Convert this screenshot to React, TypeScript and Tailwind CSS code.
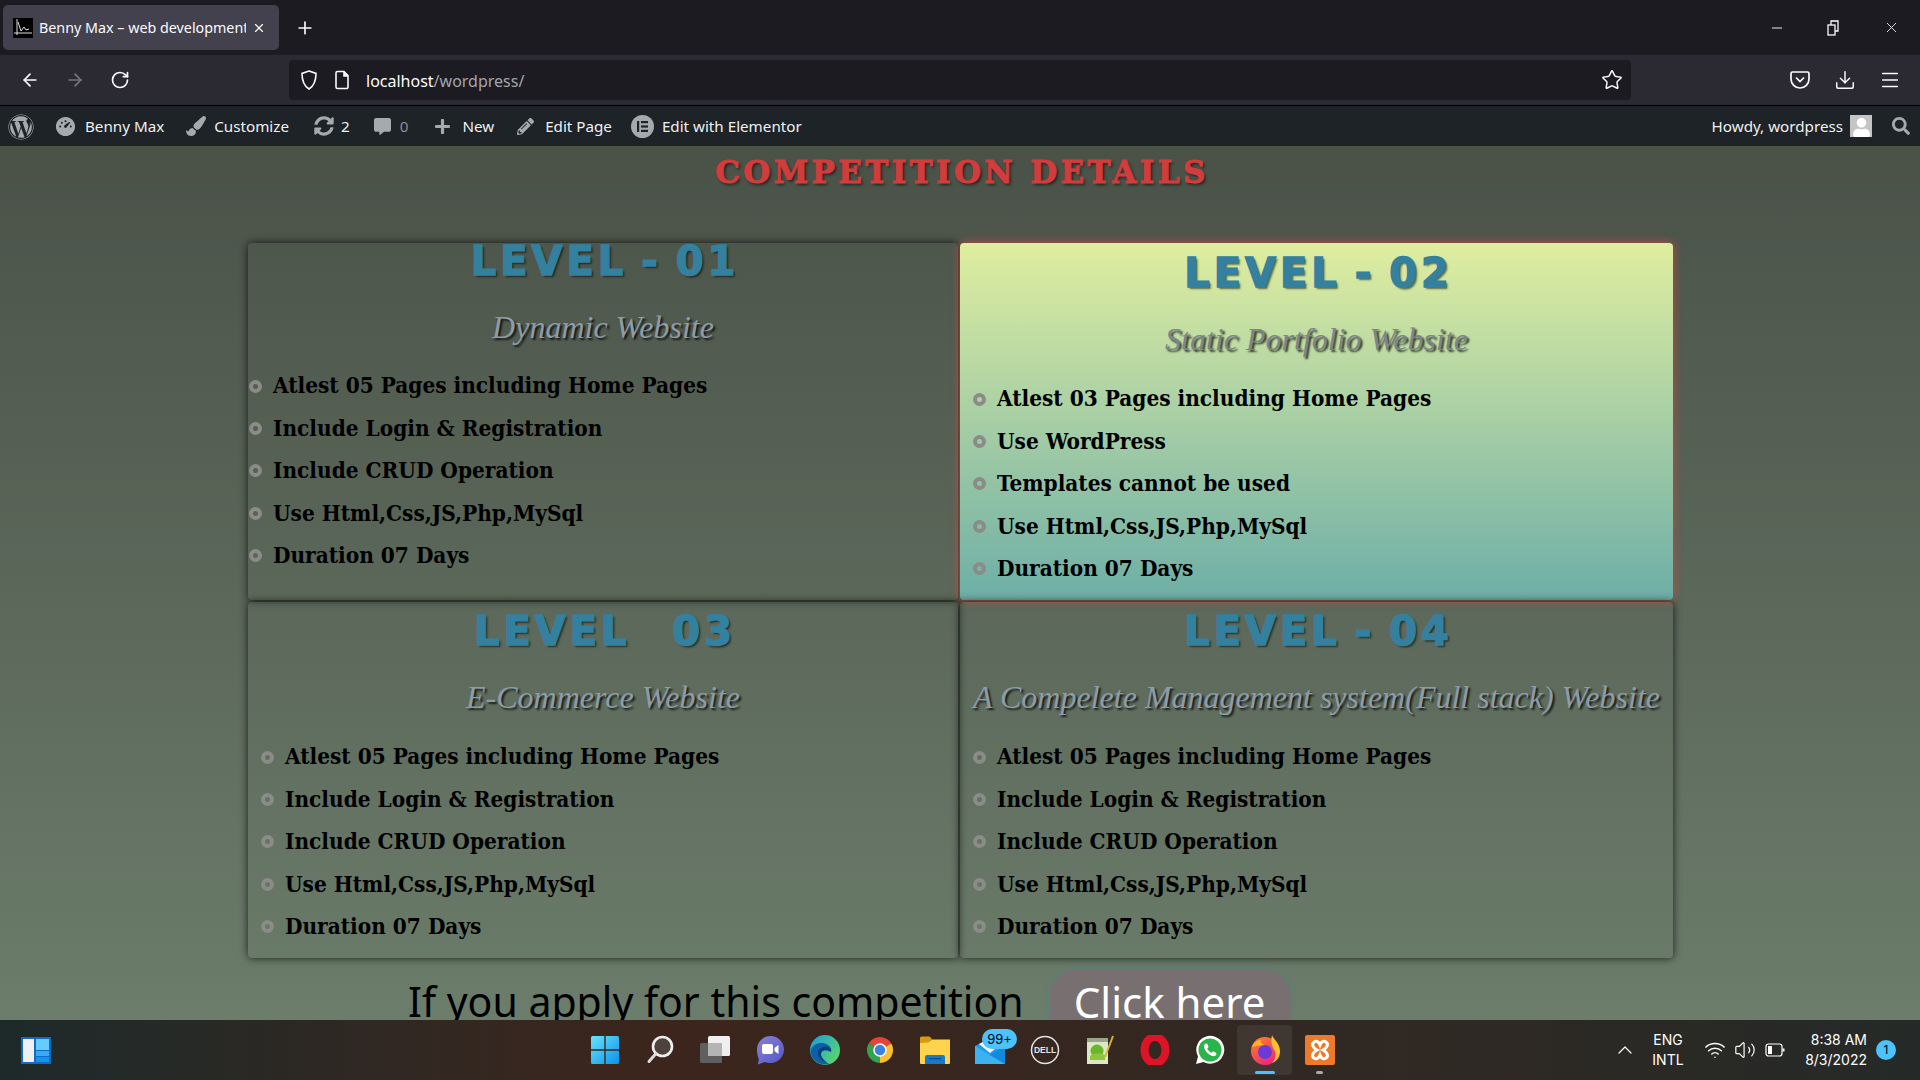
import { ArrowLeft, ArrowRight, ChevronUp, Download, Menu, Minus, Plus, RotateCw, Star, Volume2, Wifi, X } from 'lucide-react';
import { FaCommentAlt, FaPaintBrush, FaPencilAlt, FaPlus, FaSearch, FaSyncAlt, FaUser, FaWordpress } from 'react-icons/fa';
import { RiDashboard3Fill } from 'react-icons/ri';

const cards = [
  { level: 'LEVEL - 01', title: 'Dynamic Website', items: ['Atlest 05 Pages including Home Pages', 'Include Login & Registration', 'Include CRUD Operation', 'Use Html,Css,JS,Php,MySql', 'Duration 07 Days'], box: 'pt-0 shadow-[0_0_8px_rgba(0,0,0,0.75)]', list: 'pl-[2px] mt-[13px]', text: 'text-[#8d9ca8]' },
  { level: 'LEVEL - 02', title: 'Static Portfolio Website', items: ['Atlest 03 Pages including Home Pages', 'Use WordPress', 'Templates cannot be used', 'Use Html,Css,JS,Php,MySql', 'Duration 07 Days'], box: 'pt-[12px] bg-gradient-to-b from-[#dfee9f] to-[#6daea6] shadow-[0_0_10px_rgba(225,70,60,0.8)]', list: 'pl-[14px] mt-[14px]', text: 'text-[#7c8688]' },
  { level: 'LEVEL   03', title: 'E-Commerce Website', items: ['Atlest 05 Pages including Home Pages', 'Include Login & Registration', 'Include CRUD Operation', 'Use Html,Css,JS,Php,MySql', 'Duration 07 Days'], box: 'pt-[11px] shadow-[0_0_8px_rgba(0,0,0,0.75)]', list: 'pl-[14px] mt-[14px]', text: 'text-[#8d9ca8]' },
  { level: 'LEVEL - 04', title: 'A Compelete Management system(Full stack) Website', items: ['Atlest 05 Pages including Home Pages', 'Include Login & Registration', 'Include CRUD Operation', 'Use Html,Css,JS,Php,MySql', 'Duration 07 Days'], box: 'pt-[11px] shadow-[0_0_8px_rgba(0,0,0,0.75)]', list: 'pl-[14px] mt-[14px]', text: 'text-[#8d9ca8]' },
];

const Favicon = () => (
  <svg width="20" height="20" viewBox="0 0 20 20" className="shrink-0">
    <rect width="20" height="20" fill="#000" />
    <path d="M4 1v16M1 15h18M5 4l3 9 3-4 2 3 3-1" stroke="#ddd" strokeWidth="1" fill="none" />
  </svg>
);

const ShieldIcon = () => (
  <svg width="20" height="22" viewBox="0 0 20 22" fill="none" stroke="#fbfbfe" strokeWidth="1.6">
    <path d="M10 2l7 2.4c0 7-1.500 12-7 15.600-5.500-3.600-7-8.600-7-15.600z" />
  </svg>
);

const PageIcon = () => (
  <svg width="16" height="20" viewBox="0 0 16 20" fill="none" stroke="#fbfbfe" strokeWidth="1.6">
    <path d="M2 3a1.500 1.500 0 0 1 1.500-1.500H10l4 4V17a1.500 1.500 0 0 1-1.500 1.500h-9A1.500 1.500 0 0 1 2 17z" />
    <path d="M10 1.500V6h4" fill="#fbfbfe" />
  </svg>
);

const PocketIcon = () => (
  <svg width="22" height="22" viewBox="0 0 22 22" fill="none" stroke="#fbfbfe" strokeWidth="1.7">
    <path d="M3.500 3h15A1.500 1.500 0 0 1 20 4.500V10a9 9 0 0 1-18 0V4.500A1.500 1.500 0 0 1 3.500 3z" />
    <path d="M7 8.500l4 4 4-4" />
  </svg>
);

const RestoreIcon = () => (
  <svg width="14" height="16" viewBox="0 0 14 16" fill="none" stroke="#fbfbfe" strokeWidth="1.300">
    <rect x="1" y="5" width="7" height="10" />
    <path d="M4 5V1h7v10H8" />
  </svg>
);

const ElementorIcon = () => (
  <span className="w-[23px] h-[23px] rounded-full bg-[#a7aaad] flex items-center justify-center shrink-0">
    <svg width="11" height="11" viewBox="0 0 11 11" fill="#1d2327">
      <rect x="0" y="0" width="2.200" height="11" />
      <rect x="4" y="0" width="7" height="2.200" />
      <rect x="4" y="4.400" width="7" height="2.200" />
      <rect x="4" y="8.800" width="7" height="2.200" />
    </svg>
  </span>
);

const taskIcons = [
  <svg key="start" width="30" height="30" viewBox="0 0 30 30">
    <defs>
      <linearGradient id="startG" x1="0" y1="0" x2="1" y2="1">
        <stop offset="0" stopColor="#66e4fb" />
        <stop offset="1" stopColor="#0b92ec" />
      </linearGradient>
    </defs>
    <path d="M1 2.500A1.500 1.500 0 0 1 2.500 1h11.800v13.300H1zM15.700 1h11.800A1.500 1.500 0 0 1 29 2.500v11.800H15.700zM1 15.700h13.300V29H2.500A1.500 1.500 0 0 1 1 27.500zM15.700 15.700H29v11.800a1.500 1.500 0 0 1-1.500 1.500H15.700z" fill="url(#startG)" />
  </svg>,
  <svg key="search" width="30" height="30" viewBox="0 0 30 30"><circle cx="17.500" cy="11.500" r="9.500" fill="#4d423d" stroke="#eee" strokeWidth="2.600" /><path d="M11 18.500l-7 8" stroke="#ddd" strokeWidth="3" strokeLinecap="round" /></svg>,
  <svg key="tasks" width="30" height="30" viewBox="0 0 30 30"><rect x="8" y="1" width="22" height="20" rx="1.500" fill="#efefef" /><rect x="0" y="8" width="22" height="20" rx="1.500" fill="#5f5f5f" /><rect x="8" y="8" width="14" height="13" fill="#b4b4b4" /></svg>,
  <svg key="chat" width="30" height="30" viewBox="0 0 30 30"><defs><linearGradient id="chatG" x1="0" y1="0" x2="1" y2="1"><stop offset="0" stopColor="#8a80d8" /><stop offset="1" stopColor="#5057c4" /></linearGradient></defs><path d="M15.500 1C23 1 29 7 29 14.500S23 28 15.500 28c-2 0-4-.4-5.500-1l-7 2.500c-.8-.8 1.400-3.500.6-6C2.500 21 2 18 2 14.500 2 7 8 1 15.500 1z" fill="url(#chatG)" /><rect x="7" y="9" width="11" height="10" rx="2" fill="#fff" /><path d="M19.500 13l4-3v9l-4-3z" fill="#fff" /></svg>,
  <svg key="edge" width="30" height="30" viewBox="0 0 30 30"><defs><linearGradient id="edgeG" x1="0" y1="0" x2="1" y2="0.700"><stop offset="0" stopColor="#1a9ae0" /><stop offset="1" stopColor="#5ad66c" /></linearGradient></defs><circle cx="15" cy="15" r="15" fill="url(#edgeG)" /><path d="M0.500 17C2 9 9 7 15 8.500c5 1.500 7 5 6 8.500-3-2.500-8-2.500-9.500 0-2 3.500 1 9 8 12C10 31 2 26 .5 17z" fill="#0d5fa6" /><path d="M21 17c-3-2.500-8-2.500-9.500 0-1.500 3 .5 7 5 10-5-1-9-5-8.500-10 .5-4 6-6 10-5 2.500.7 3.500 2.500 3 5z" fill="#093f7a" /></svg>,
  <svg key="chrome" width="28" height="28" viewBox="0 0 30 30"><path d="M15 15L2.880 8A14 14 0 0 1 27.120 8Z" fill="#e5443a" /><path d="M15 15L27.120 8A14 14 0 0 1 15 29Z" fill="#fbc02d" /><path d="M15 15L15 29A14 14 0 0 1 2.880 8Z" fill="#33a24f" /><circle cx="15" cy="15" r="7.200" fill="#fff" /><circle cx="15" cy="15" r="5.600" fill="#3b82e0" /></svg>,
  <svg key="files" width="30" height="30" viewBox="0 0 30 30"><path d="M0 3a1.500 1.500 0 0 1 1.500-1.500h8l3 3h-1L8 8H0z" fill="#d99a0b" /><path d="M0 8l8-.5 4-3h18V28a1 1 0 0 1-1 1H1a1 1 0 0 1-1-1z" fill="#fdd44b" /><path d="M5 22a2 2 0 0 1 2-2h16a2 2 0 0 1 2 2v7H5z" fill="#1679c9" /><rect x="9" y="23" width="12" height="1.300" fill="#0b4f8a" /></svg>,
  <svg key="mail" width="30" height="30" viewBox="0 0 30 30"><path d="M0 11l15-8 15 8v18H0z" fill="#1f9ae8" /><path d="M4 9L18 2l8 7-11 9z" fill="#eef8ff" /><path d="M0 11l30 18H1a1 1 0 0 1-1-1z" fill="#3db2f3" /><path d="M0 11l15 9 15-9v18z" fill="#1289dd" /></svg>,
  <svg key="dell" width="30" height="30" viewBox="0 0 30 30"><circle cx="15" cy="15" r="13.500" fill="none" stroke="#e4e4e4" strokeWidth="1.500" /><text x="15" y="18" textAnchor="middle" fontSize="8.500" fontWeight="700" fontFamily="'Liberation Sans', sans-serif" fill="#e4e4e4">DELL</text></svg>,
  <svg key="np" width="30" height="30" viewBox="0 0 30 30"><rect x="2" y="3" width="21" height="26" fill="#dbe8c4" /><rect x="2" y="3" width="21" height="4" fill="#98a58a" /><circle cx="12" cy="16" r="6.500" fill="#6bb52e" /><path d="M5 21c4-3 10-3 15-1v5H5z" fill="#8ec63f" /><path d="M20 22L28 1" stroke="#d8b13a" strokeWidth="2" /></svg>,
  <svg key="opera" width="30" height="30" viewBox="0 0 30 30"><ellipse cx="15" cy="15" rx="10.500" ry="13" fill="none" stroke="#dd1327" strokeWidth="8" /></svg>,
  <svg key="wa" width="30" height="30" viewBox="0 0 30 30"><path d="M1 29l2-7.500a14 14 0 1 1 5.500 5.500z" fill="#fff" /><circle cx="15" cy="15" r="11.500" fill="#29b54c" /><path d="M10.500 8.500c-1.500 1-2 3-1 5.300 1.400 3.200 4 5.800 7 7 2.300.8 4 .2 5-1.300l-.5-1.800-3-1.500-1.500 1.500c-2-.8-3.500-2.300-4.300-4.200l1.400-1.500-1.300-3.300z" fill="#fff" /></svg>,
  <svg key="ff" width="30" height="30" viewBox="0 0 30 30"><defs><linearGradient id="ffG" x1="0" y1="0" x2="0.600" y2="1"><stop offset="0" stopColor="#ff8a1f" /><stop offset="1" stopColor="#f0267a" /></linearGradient></defs><circle cx="15" cy="16" r="14" fill="url(#ffG)" /><path d="M22 0c1 4 8 8 8 16 0 6-3 10-8 12 5-5 4-12 1-15-2-4-2-9-1-13z" fill="#ffc12e" /><circle cx="15" cy="17" r="7" fill="#6a3bd6" /><path d="M2 12c2-5 6-7 9-7-1 3 1 4 4 5-5 0-9 1-13 2z" fill="#ffb02e" /></svg>,
  <svg key="xampp" width="30" height="30" viewBox="0 0 30 30"><rect x="0" y="0" width="30" height="30" rx="2" fill="#ed7a2a" /><path d="M9 7c3-2 5 .5 6 3 1-2.500 3-5 6-3 3 2 1 6-3 8 4 2 6 6 3 8-3 2-5-.5-6-3-1 2.500-3 5-6 3-3-2-1-6 3-8-4-2-6-6-3-8z" fill="none" stroke="#fff" strokeWidth="3" /></svg>,
];

const adminItems = [
  { icon: <RiDashboard3Fill size={23} />, label: 'Benny Max', box: 'ml-[20px] gap-[8px]', text: 'text-[#f0f0f1]' },
  { icon: <FaPaintBrush size={20} />, label: 'Customize', box: 'ml-[22px] gap-[8px]', text: 'text-[#f0f0f1]' },
  { icon: <FaSyncAlt size={20} />, label: '2', box: 'ml-[25px] gap-[7px]', text: 'text-[#f0f0f1]' },
  { icon: <FaCommentAlt size={17} />, label: '0', box: 'ml-[24px] gap-[9px]', text: 'text-[#8c8f94]' },
  { icon: <FaPlus size={17} />, label: 'New', box: 'ml-[26px] gap-[11px]', text: 'text-[#f0f0f1]' },
  { icon: <FaPencilAlt size={17} />, label: 'Edit Page', box: 'ml-[23px] gap-[11px]', text: 'text-[#f0f0f1]' },
  { icon: <ElementorIcon />, label: 'Edit with Elementor', box: 'ml-[19px] gap-[8px]', text: 'text-[#f0f0f1]' },
];

function Card({ card }: { card: (typeof cards)[number] }) {
  return (
    <div className={`rounded-[4px] ${card.box}`}>
      <h2 className="h-[36px] pl-[4px] flex items-center justify-center whitespace-pre text-[40px] font-bold tracking-[4px] [word-spacing:-4px] text-[#33809f] [-webkit-text-stroke:1.5px_#33809f] font-['DejaVu_Sans',sans-serif] [text-shadow:2px_2px_2px_rgba(0,0,0,0.55)]">
        {card.level}
      </h2>
      <h3 className={`mt-[23px] h-[50px] flex items-center justify-center italic text-[32px] whitespace-nowrap font-['Liberation_Serif',serif] ${card.text} [text-shadow:2px_2px_2px_rgba(0,0,0,0.75)]`}>
        {card.title}
      </h3>
      <ul className={card.list}>
        {card.items.map((item) => (
          <li key={item} className="h-[42.4px] flex items-center gap-[12px] text-[22.4px] font-bold text-black font-['DejaVu_Serif_Condensed','DejaVu_Serif',serif]">
            <span className="w-[13px] h-[13px] -mx-[1px] rounded-full border-[4px] border-[#8b8b87] shrink-0" />
            {item}
          </li>
        ))}
      </ul>
    </div>
  );
}

export default function App() {
  return (
    <div className="w-[1920px] h-screen overflow-hidden flex flex-col font-['Noto_Sans',sans-serif]">
      {/* browser chrome */}
      <div className="h-[55px] shrink-0 bg-[#1c1b22] flex items-center pl-[3px] text-[#fbfbfe]">
        <div className="w-[276px] h-[45px] rounded-[5px] bg-[#42414d] flex items-center pl-[10px] pr-[12px] gap-[6px]">
          <Favicon />
          <span className="w-[207px] overflow-hidden whitespace-nowrap text-[14.3px]">Benny Max – web development</span>
          <X size={14} className="shrink-0" />
        </div>
        <Plus size={20} className="ml-[16px]" />
        <div className="ml-auto flex items-center gap-[42px] pr-[20px]">
          <Minus size={16} strokeWidth={1.4} />
          <RestoreIcon />
          <X size={17} strokeWidth={1.2} />
        </div>
      </div>
      <div className="h-[50px] shrink-0 bg-[#2b2a33] flex items-center text-[#fbfbfe]">
        <div className="w-[289px] pl-[20px] flex items-center gap-[25px]">
          <ArrowLeft size={20} />
          <ArrowRight size={20} className="text-[#77767f]" />
          <RotateCw size={20} />
        </div>
        <div className="w-[1342px] h-[40px] rounded-[4px] bg-[#1c1b22] flex items-center pl-[10px] pr-[8px]">
          <ShieldIcon />
          <span className="ml-[15px]"><PageIcon /></span>
          <span className="ml-[16px] pt-[2px] text-[16px]">localhost<span className="text-[#a5a4ab]">/wordpress/</span></span>
          <Star size={22} strokeWidth={1.6} className="ml-auto" />
        </div>
        <div className="ml-auto flex items-center gap-[23px] pr-[19px]">
          <PocketIcon />
          <Download size={22} strokeWidth={1.6} />
          <Menu size={22} strokeWidth={1.6} />
        </div>
      </div>
      <div className="h-[41px] shrink-0 bg-[#1d2327] border-t border-black flex items-center pl-[8px] pr-[10px] pt-[1px] text-[15.2px] text-[#a7aaad]">
        <FaWordpress size={26} />
        <div className="flex items-center">
          {adminItems.map((item) => (
            <div key={item.label} className={`flex items-center ${item.box}`}>
              {item.icon}
              <span className={item.text}>{item.label}</span>
            </div>
          ))}
        </div>
        <div className="ml-auto flex items-center gap-[7px] text-[#f0f0f1]">
          <span>Howdy, wordpress</span>
          <span className="w-[22px] h-[22px] bg-[#c4c4c4] flex items-end justify-center overflow-hidden">
            <FaUser size={19} color="#fff" />
          </span>
          <FaSearch size={18} className="ml-[13px] text-[#a7aaad]" />
        </div>
      </div>

      {/* page */}
      <main className="flex-1 min-h-0 overflow-hidden bg-gradient-to-b from-[#4a5248] to-[#6c7d6b]">
        <h1 className="h-[52px] pl-[4px] flex items-center justify-center text-[31px] font-bold tracking-[3.4px] text-[#d13c3c] [-webkit-text-stroke:1px_#d13c3c] font-['DejaVu_Serif',serif] [text-shadow:2px_2px_3px_rgba(0,0,0,0.6)]">
          COMPETITION DETAILS
        </h1>
        <div className="mt-[45px] ml-[248px] w-[1425px] grid grid-cols-[710px_713px] grid-rows-[357px_356px] gap-[2px]">
          {cards.map((card) => (
            <Card key={card.level} card={card} />
          ))}
        </div>
        <div className="mt-[11px] ml-[408px] flex items-start">
          <span className="mt-[7px] text-[41px] leading-[50px] text-black whitespace-nowrap">If you apply for this competition</span>
          <button className="ml-[25px] w-[242px] h-[80px] rounded-[28px] bg-[#787070] text-white text-[42px] leading-[64px] pb-[14px] shadow-[0_0_4px_rgba(60,140,140,0.7)]">
            Click here
          </button>
        </div>
      </main>

      {/* windows taskbar */}
      <div className="h-[60px] shrink-0 flex items-center text-white bg-gradient-to-r from-[#1d2a2a] via-[#3c251c] via-35% to-[#252a28] font-['Inter',sans-serif]">
        <div className="ml-[21px] w-[30px] h-[27px] bg-[#0f6cc0] p-[2px] flex gap-[2px]">
          <span className="w-[11px] h-full bg-[#f0f0f0]" />
          <span className="flex-1 flex flex-col gap-[1px]">
            <span className="flex-1 bg-[#66ccff]" />
            <span className="h-[5px] bg-[#38aaf5]" />
            <span className="h-[5px] bg-[#0f96f0]" />
          </span>
        </div>
        <div className="ml-[526px] flex items-center">
          {taskIcons.map((icon, i) => (
            <div key={i} className={`relative w-[55px] h-[50px] flex items-center justify-center rounded-[4px] ${i === 12 ? 'bg-[#ffffff12]' : ''}`}>
              {icon}
              {i === 7 && (
                <span className="absolute left-[20px] top-[4px] w-[35px] h-[20px] rounded-full bg-[#4cc2ff] text-black text-[13px] leading-[20px] text-center">99+</span>
              )}
              {i === 12 && <span className="absolute bottom-[1px] w-[20px] h-[3px] rounded-full bg-[#4cc2ff]" />}
              {i === 13 && <span className="absolute bottom-[1px] w-[7px] h-[3px] rounded-full bg-[#aaa]" />}
            </div>
          ))}
        </div>
        <ChevronUp size={24} strokeWidth={1.2} className="ml-[266px]" />
        <div className="ml-[11px] w-[40px] text-center text-[14px] leading-[20px]">
          <div>ENG</div>
          <div>INTL</div>
        </div>
        <Wifi size={22} strokeWidth={1.6} className="ml-[16px]" />
        <Volume2 size={22} strokeWidth={1.3} className="ml-[8px]" />
        <svg width="20" height="14" viewBox="0 0 20 14" fill="none" stroke="#fff" strokeWidth="1.200" className="ml-[9px]">
          <rect x="1" y="1" width="16" height="12" rx="2.500" />
          <rect x="3" y="3" width="4" height="8" fill="#fff" stroke="none" />
          <path d="M18.500 5.500v3" strokeWidth="2" />
        </svg>
        <div className="ml-auto mr-[9px] text-right text-[14px] leading-[20px]">
          <div>8:38 AM</div>
          <div>8/3/2022</div>
        </div>
        <span className="mr-[24px] w-[20px] h-[20px] rounded-full bg-[#4cc2ff] text-black text-[12px] leading-[20px] text-center">1</span>
      </div>
    </div>
  );
}
